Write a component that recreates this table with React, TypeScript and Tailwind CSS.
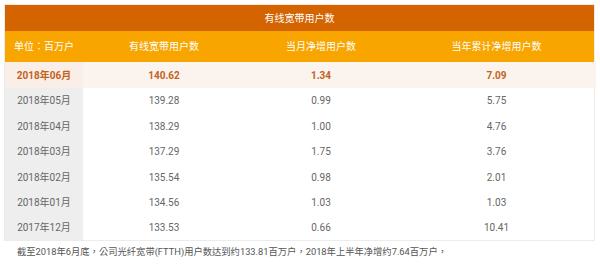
import React from "react";

const rows = [
  ["2018年05月", "139.28", "0.99", "5.75"],
  ["2018年04月", "138.29", "1.00", "4.76"],
  ["2018年03月", "137.29", "1.75", "3.76"],
  ["2018年02月", "135.54", "0.98", "2.01"],
  ["2018年01月", "134.56", "1.03", "1.03"],
  ["2017年12月", "133.53", "0.66", "10.41"],
];
const heights = ["h-[25px]", "h-[26px]", "h-[25px]", "h-[26px]", "h-[25px]", "h-[25px]"];

export default function App() {
  return (
    <div
      lang="zh-TW"
      className="w-[600px] h-[267px] bg-white overflow-hidden text-[10px]"
      style={{ fontFamily: "Roboto, 'Noto Sans CJK TC', sans-serif" }}
    >
      <div className="pt-[4px] pl-[4px]">
        <div className="w-[591px] border border-[#ececec] border-t-[#fde9d3]">
          <div className="h-[26px] bg-[#d46400] text-white flex items-center justify-center">
            有线宽带用户数
          </div>
          <div className="h-[31px] bg-[#f8a500] text-white grid grid-cols-[78px_162px_152px_199px] items-center text-center">
            <div>单位：百万户</div>
            <div>有线宽带用户数</div>
            <div>当月净增用户数</div>
            <div>当年累计净增用户数</div>
          </div>
          <div className="h-[26px] grid grid-cols-[78px_162px_152px_199px] text-center font-bold text-[#c4621c]">
            <div className="bg-[#f9efe8] flex items-center justify-center">2018年06月</div>
            <div className="bg-[#fbf3ee] flex items-center justify-center">140.62</div>
            <div className="bg-[#fbf3ee] flex items-center justify-center">1.34</div>
            <div className="bg-[#fbf3ee] flex items-center justify-center">7.09</div>
          </div>
          {rows.map((r, i) => (
            <div
              key={r[0]}
              className={`${heights[i]} grid grid-cols-[78px_162px_152px_199px] text-center text-[#666666]`}
            >
              <div className="bg-[#eeeeee] flex items-center justify-center">{r[0]}</div>
              <div className="flex items-center justify-center">{r[1]}</div>
              <div className="flex items-center justify-center">{r[2]}</div>
              <div className="flex items-center justify-center">{r[3]}</div>
            </div>
          ))}
        </div>
        <div className="pl-[13px] pt-[4px] text-[#555555] text-[9.3px] leading-[14px]">
          截至2018年6月底，公司光纤宽带(FTTH)用户数达到约133.81百万户，2018年上半年净增约7.64百万户，
        </div>
      </div>
    </div>
  );
}
